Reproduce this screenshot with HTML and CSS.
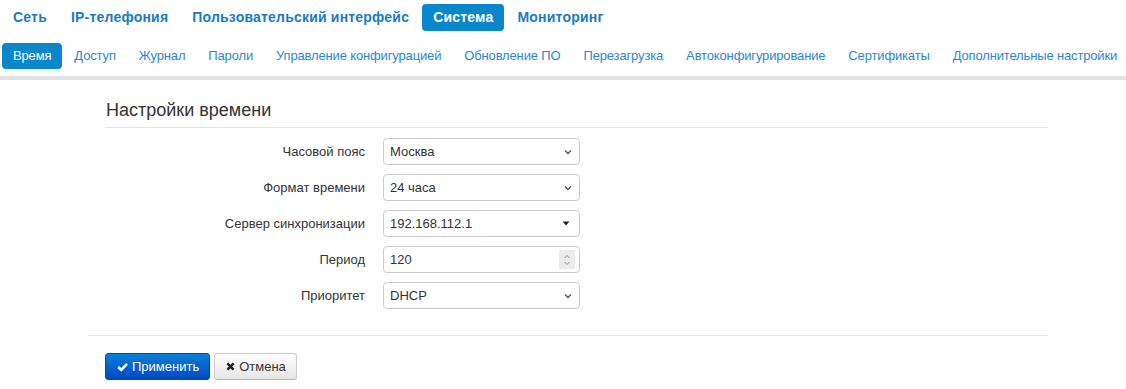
FILE: index.html
```html
<!DOCTYPE html>
<html lang="ru">
<head>
<meta charset="utf-8">
<title>Система — Время</title>
<link rel="stylesheet" href="styles.css">
</head>
<body>
<nav class="topnav">
  <a class="tab">Сеть</a>
  <a class="tab">IP-телефония</a>
  <a class="tab">Пользовательский интерфейс</a>
  <a class="tab active">Система</a>
  <a class="tab">Мониторинг</a>
</nav>
<nav class="subnav">
  <a class="sub active">Время</a>
  <a class="sub">Доступ</a>
  <a class="sub">Журнал</a>
  <a class="sub">Пароли</a>
  <a class="sub">Управление конфигурацией</a>
  <a class="sub">Обновление ПО</a>
  <a class="sub">Перезагрузка</a>
  <a class="sub">Автоконфигурирование</a>
  <a class="sub">Сертификаты</a>
  <a class="sub">Дополнительные настройки</a>
</nav>
<div class="bar"></div>
<main class="content">
  <h2 class="legend">Настройки времени</h2>
  <div class="form">
    <div class="row">
      <label class="label">Часовой пояс</label>
      <div class="field select"><span class="value">Москва</span>
        <svg class="chev" width="8" height="6" viewBox="0 0 8 6"><path d="M1 1.5 L4 4.5 L7 1.5" fill="none" stroke="#555" stroke-width="1.4"/></svg>
      </div>
    </div>
    <div class="row">
      <label class="label">Формат времени</label>
      <div class="field select"><span class="value">24 часа</span>
        <svg class="chev" width="8" height="6" viewBox="0 0 8 6"><path d="M1 1.5 L4 4.5 L7 1.5" fill="none" stroke="#555" stroke-width="1.4"/></svg>
      </div>
    </div>
    <div class="row">
      <label class="label">Сервер синхронизации</label>
      <div class="field select"><span class="value">192.168.112.1</span>
        <svg class="caret" width="8" height="5" viewBox="0 0 8 5"><path d="M0.5 0.5 L7.5 0.5 L4 4.5 Z" fill="#222"/></svg>
      </div>
    </div>
    <div class="row">
      <label class="label">Период</label>
      <div class="field number"><span class="value">120</span>
        <span class="spin"><svg width="8" height="14" viewBox="0 0 8 14"><path d="M1.5 5 L4 2.5 L6.5 5 M1.5 9 L4 11.5 L6.5 9" fill="none" stroke="#888" stroke-width="1"/></svg></span>
      </div>
    </div>
    <div class="row">
      <label class="label">Приоритет</label>
      <div class="field select"><span class="value">DHCP</span>
        <svg class="chev" width="8" height="6" viewBox="0 0 8 6"><path d="M1 1.5 L4 4.5 L7 1.5" fill="none" stroke="#555" stroke-width="1.4"/></svg>
      </div>
    </div>
  </div>
  <div class="actions">
    <button class="btn primary"><svg width="11" height="10" viewBox="0 0 11 10"><path d="M1.2 5 L4.3 8 L10 1.8" fill="none" stroke="#fff" stroke-width="2.6"/></svg>Применить</button>
    <button class="btn cancel"><svg width="9" height="9" viewBox="0 0 9 9"><path d="M1.4 1.4 L7.6 7.6 M7.6 1.4 L1.4 7.6" stroke="#222" stroke-width="2.5"/></svg>Отмена</button>
  </div>
</main>
</body>
</html>
```
FILE: styles.css
```css
html, body {
  margin: 0;
  padding: 0;
  background: #fff;
  font-family: "Liberation Sans", Arial, sans-serif;
  font-size: 13px;
  color: #333;
}

.topnav {
  display: flex;
  gap: 2px;
  padding: 4px 0 0 2px;
  height: 27px;
}

.tab {
  display: block;
  flex-shrink: 0;
  white-space: nowrap;
  padding: 0 11px;
  height: 27px;
  line-height: 27px;
  font-size: 14px;
  font-weight: bold;
  letter-spacing: 0.2px;
  color: #1a7bc2;
  border-radius: 4px;
  cursor: pointer;
}

.tab.active {
  background: #0a87cc;
  color: #fff;
}

.subnav {
  display: flex;
  gap: 1px;
  padding: 12px 0 0 2px;
  height: 26px;
}

.sub {
  display: block;
  flex-shrink: 0;
  white-space: nowrap;
  padding: 0 11px;
  height: 26px;
  line-height: 26px;
  font-size: 13px;
  letter-spacing: -0.15px;
  color: #2c87d0;
  border-radius: 4px;
  cursor: pointer;
}

.sub.active {
  background: #0a87cc;
  color: #fff;
}

.bar {
  margin-top: 7px;
  height: 4px;
  background: #e2e2e2;
}

.content {
  margin-left: 88px;
  width: 960px;
}

.legend {
  margin: 18px 0 0 17px;
  padding: 0 0 5px 1px;
  font-size: 18px;
  line-height: 24px;
  font-weight: normal;
  color: #333;
  border-bottom: 1px solid #e5e5e5;
}

.form {
  display: flex;
  flex-direction: column;
  gap: 9px;
  margin-top: 10px;
}

.row {
  display: flex;
  align-items: center;
  gap: 18px;
}

.label {
  width: 277px;
  text-align: right;
  color: #333;
}

.field {
  box-sizing: border-box;
  width: 197px;
  height: 27px;
  border: 1px solid #ccc;
  border-radius: 4px;
  display: flex;
  align-items: center;
  padding: 0 7px 0 6px;
  background: #fff;
}

.value {
  flex: 1;
  color: #333;
}

.caret {
  margin-right: 2px;
}

.spin {
  display: flex;
  align-items: center;
  justify-content: center;
  width: 16px;
  height: 19px;
  background: #ececec;
  margin-right: -3px;
}

.actions {
  display: flex;
  gap: 4px;
  margin-top: 26px;
  padding: 17px 0 0 17px;
  border-top: 1px solid #e5e5e5;
}

.btn {
  display: flex;
  align-items: center;
  gap: 4px;
  height: 27px;
  padding: 0 10px 0 11px;
  font-family: "Liberation Sans", Arial, sans-serif;
  font-size: 13px;
  color: #333;
  border: 1px solid #ccc;
  border-bottom-color: #b3b3b3;
  border-radius: 3px;
  background: linear-gradient(#ffffff, #e6e6e6);
  cursor: pointer;
}

.btn.primary {
  color: #fff;
  border-color: #0046b8;
  background: linear-gradient(#0a7fd6, #0049c2);
}
```
